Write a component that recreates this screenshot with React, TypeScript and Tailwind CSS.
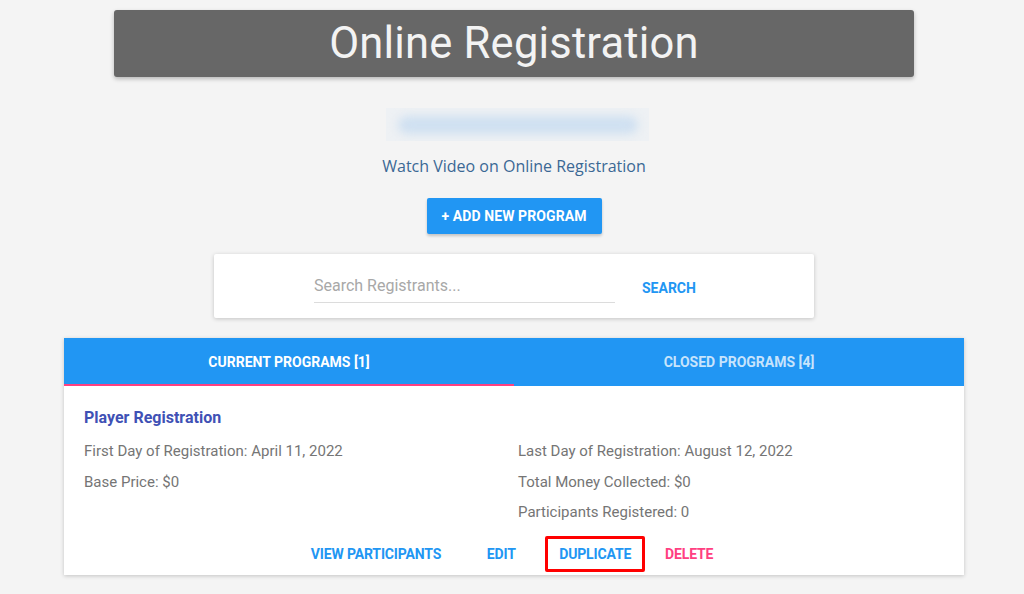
import React from "react";

export default function App() {
  const roboto = { fontFamily: "Roboto, 'Liberation Sans', sans-serif" };
  return (
    <div className="min-h-[594px] w-full bg-[#f4f4f4] flex flex-col items-center pl-[4px]" style={roboto}>
      <div className="mt-[10px] w-[800px] h-[67px] bg-[#676767] rounded-[3px] shadow-[0_2px_4px_rgba(0,0,0,0.25)] flex items-center justify-center">
        <h1 className="text-[43.5px] leading-none text-[#f3f3f3] font-normal tracking-[0.2px]">Online Registration</h1>
      </div>

      <div className="mt-[31px] ml-[7px] w-[263px] h-[33px] bg-[#eef1f4] flex items-center justify-center overflow-hidden">
        <div className="w-[240px] h-[18px] rounded-full bg-[#cfe0f1] blur-[5px]" />
      </div>

      <a
        className="mt-[14px] text-[16px] leading-[22px] text-[#3b6894]"
        style={{ fontFamily: "'Open Sans', 'Liberation Sans', sans-serif" }}
      >
        Watch Video on Online Registration
      </a>

      <button className="mt-[21px] w-[175px] h-[36px] bg-[#2196f3] text-white text-[14px] font-bold rounded-[2px] shadow-[0_2px_3px_rgba(0,0,0,0.2)] tracking-[0.1px]">
        + ADD NEW PROGRAM
      </button>

      <div className="mt-[20px] w-[600px] h-[64px] bg-white rounded-[2px] shadow-[0_1px_4px_rgba(0,0,0,0.2)] flex items-center">
        <div className="ml-[100px] w-[301px] h-[34px] pt-[7px] border-b border-[#dcdcdc] flex items-start">
          <span className="text-[16px] leading-[20px] text-[#a8a8a8]">Search Registrants...</span>
        </div>
        <span className="ml-[27px] mt-[4px] text-[14px] font-bold text-[#2196f3]">SEARCH</span>
      </div>

      <div className="mt-[20px] w-[900px] shadow-[0_1px_4px_rgba(0,0,0,0.2)] bg-white">
        <div className="h-[48px] bg-[#2196f3] flex">
          <div className="relative w-1/2 flex items-center justify-center text-[14px] font-bold text-white">
            CURRENT PROGRAMS [1]
            <div className="absolute left-0 right-0 bottom-0 h-[2px] bg-[#ff4081]" />
          </div>
          <div className="w-1/2 flex items-center justify-center text-[14px] font-bold text-white/75">
            CLOSED PROGRAMS [4]
          </div>
        </div>

        <div className="px-[20px] pt-[21px] pb-[3px]">
          <div className="text-[16px] font-bold text-[#3f51b5] leading-[22px]">Player Registration</div>
          <div className="mt-[10px] flex text-[15px] text-[#757575]">
            <div className="w-[434px] flex flex-col">
              <div className="h-[31px] leading-[24px]">First Day of Registration: April 11, 2022</div>
              <div className="h-[30px] leading-[24px]">Base Price: $0</div>
            </div>
            <div className="flex flex-col">
              <div className="h-[31px] leading-[24px]">Last Day of Registration: August 12, 2022</div>
              <div className="h-[30px] leading-[24px]">Total Money Collected: $0</div>
              <div className="h-[30px] leading-[24px]">Participants Registered: 0</div>
            </div>
          </div>
          <div className="mt-[6px] flex justify-center text-[14px] font-bold tracking-[-0.15px]">
            <button className="h-[36px] px-[16px] min-w-[88px] text-[#2196f3]">VIEW PARTICIPANTS</button>
            <button className="h-[36px] px-[16px] min-w-[88px] text-[#2196f3]">EDIT</button>
            <button className="h-[36px] px-[14px] min-w-[88px] text-[#2196f3] outline outline-[3px] outline-[#ff0000] -outline-offset-[3px] rounded-[2px]">DUPLICATE</button>
            <button className="h-[36px] px-[16px] min-w-[88px] text-[#ff4081]">DELETE</button>
          </div>
        </div>
      </div>
    </div>
  );
}
